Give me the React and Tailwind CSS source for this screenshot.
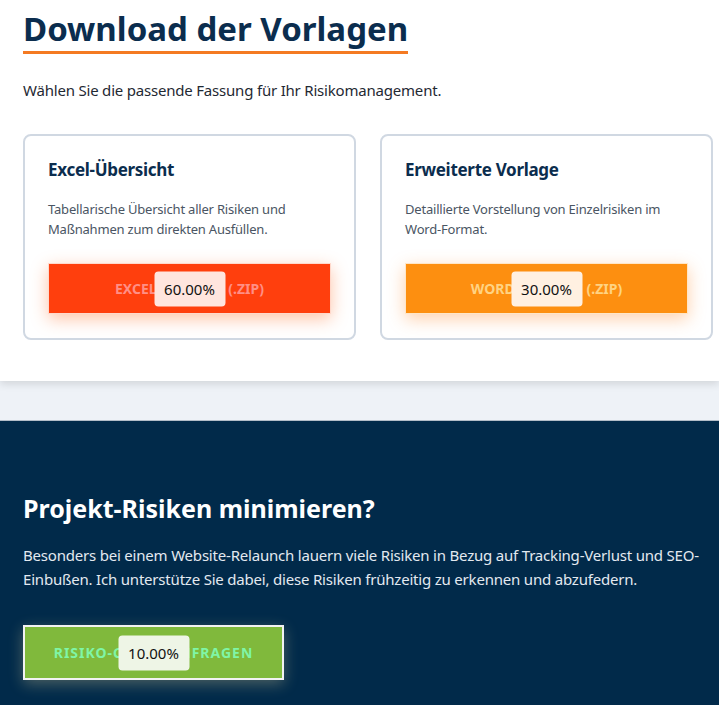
import { useState } from "react";

const templates = [
  {
    title: "Excel-Übersicht",
    text: "Tabellarische Übersicht aller Risiken und Maßnahmen zum direkten Ausfüllen.",
    label: "Excel Vorlage (.zip)",
    progress: "60.00%",
    button: "bg-[#ff3f0d] text-[#ff8f86] border-[#ffd9cc] shadow-[0_5px_16px_rgba(255,110,40,0.4)]",
    badge: "bg-[#ffe5de]",
  },
  {
    title: "Erweiterte Vorlage",
    text: "Detaillierte Vorstellung von Einzelrisiken im Word-Format.",
    label: "Word Vorlage (.zip)",
    progress: "30.00%",
    button: "bg-[#fd8f10] text-[#ffd383] border-[#ffe6c6] shadow-[0_5px_16px_rgba(255,140,50,0.4)]",
    badge: "bg-[#fff0e1]",
  },
];

const DownloadButton = ({ label, progress, className, badgeClass }) => (
  <button
    className={`relative w-full h-[51px] border flex items-center justify-center text-[14px] font-bold uppercase ${className}`}
  >
    {label}
    <span
      className={`absolute left-1/2 top-1/2 -translate-x-1/2 -translate-y-1/2 w-[71px] h-[35px] rounded-[4px] flex items-center justify-center text-[15px] font-normal normal-case text-[#111] ${badgeClass}`}
    >
      {progress}
    </span>
  </button>
);

const App = () => {
  const [active] = useState(null);

  return (
    <div className="min-h-screen bg-[#012a4a] font-['Noto_Sans',sans-serif]">
      {/* Downloads */}
      <section className="relative z-10 bg-white pl-[23px] pr-[6px] pt-[8px] pb-[41px] shadow-[0_3px_8px_rgba(0,0,0,0.12)]">
        <h2 className="inline-block text-[33px] leading-[42px] font-bold text-[#0b2d4e] border-b-[3px] border-[#f47a22] pb-[1px]">
          Download der Vorlagen
        </h2>
        <p className="mt-[24px] text-[15px] leading-[24px] tracking-[-0.2px] text-[#1f2933]">
          Wählen Sie die passende Fassung für Ihr Risikomanagement.
        </p>

        <div className="mt-[32px] grid grid-cols-2 gap-[24px]">
          {templates.map((t) => (
            <div
              key={t.title}
              className={`border-2 border-[#d0d8e2] rounded-[8px] px-[23px] pt-[20px] pb-[24px] ${active === t.title ? "border-[#f47a22]" : ""}`}
            >
              <h3 className="text-[17px] leading-[28px] font-bold tracking-[-0.3px] text-[#0b2d4e]">{t.title}</h3>
              <p className="mt-[15px] text-[13px] leading-[20px] tracking-[-0.2px] text-[#4a5563]">{t.text}</p>
              <div className="mt-[24px]">
                <DownloadButton
                  label={t.label}
                  progress={t.progress}
                  className={t.button}
                  badgeClass={t.badge}
                />
              </div>
            </div>
          ))}
        </div>
      </section>

      {/* spacer band */}
      <div className="h-[40px] bg-[#eef2f7] border-b border-[#b3bdc8]" />

      {/* Call to action */}
      <section className="bg-[#012a4a] pl-[23px] pr-[6px] pt-[70px] pb-[40px]">
        <h2 className="text-[25px] leading-[34px] font-bold text-white">Projekt-Risiken minimieren?</h2>
        <p className="mt-[18px] text-[15px] leading-[24px] tracking-[-0.2px] text-[#e3e9f0]">
          Besonders bei einem Website-Relaunch lauern viele Risiken in Bezug auf Tracking-Verlust und SEO-Einbußen. Ich unterstütze Sie dabei, diese Risiken frühzeitig zu erkennen und abzufedern.
        </p>
        <button className="relative mt-[34px] w-[261px] h-[55px] bg-[#80b93c] border-2 border-[#f2f2f2] flex items-center justify-center text-[14px] font-bold uppercase tracking-[1px] text-[#7ff5a6] shadow-[0_4px_14px_rgba(255,230,160,0.3)]">
          Risiko-Check anfragen
          <span className="absolute left-1/2 top-1/2 -translate-x-1/2 -translate-y-1/2 w-[71px] h-[35px] rounded-[4px] bg-[#eef5e6] flex items-center justify-center text-[15px] font-normal tracking-normal normal-case text-[#111]">
            10.00%
          </span>
        </button>
      </section>
    </div>
  );
};

export default App;
